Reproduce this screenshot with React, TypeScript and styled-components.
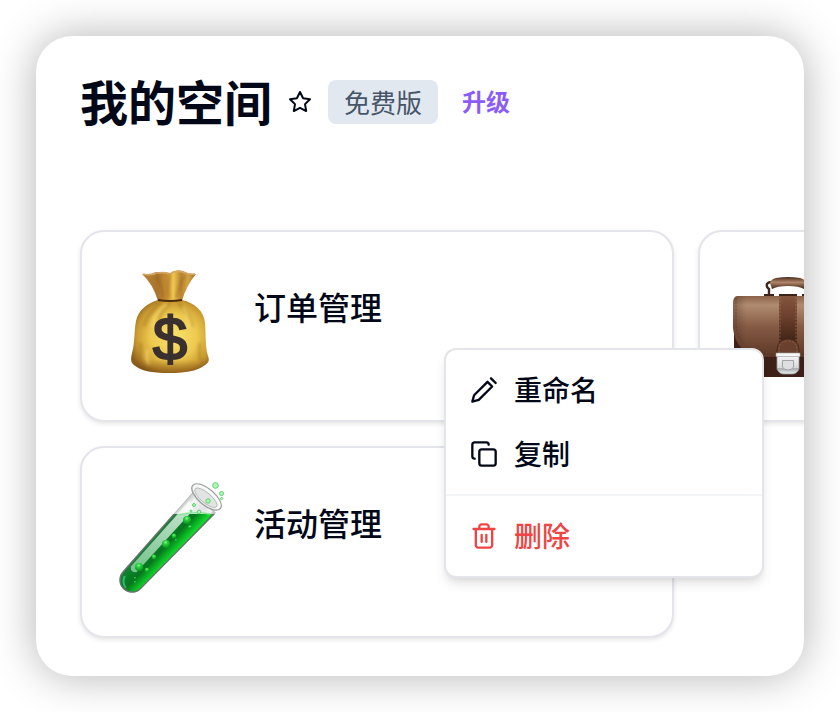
import React from "react";
import styled, { createGlobalStyle, css } from "styled-components";

const GlobalStyle = createGlobalStyle`
  *, *::before, *::after { box-sizing: border-box; }
  body {
    margin: 0;
    background: #ffffff;
    color: #020817;
    font-family: "Noto Sans CJK SC", "Noto Sans", sans-serif;
  }
  h1, h2, ul { margin: 0; padding: 0; }
  ul { list-style: none; }
`;

const Page = styled.div`
  padding: 36px;
`;

const Panel = styled.main`
  padding: 36px 0 38px 44px;
  border-radius: 36px;
  background: #ffffff;
  box-shadow: 0 0 44px rgba(0, 0, 0, 0.3);
  overflow: hidden;
`;

const Header = styled.header`
  display: flex;
  align-items: center;
  height: 60px;
  margin-bottom: 98px;
`;

const Title = styled.h1`
  padding-bottom: 4px;
  font-size: 48px;
  line-height: 56px;
  font-weight: 700;
  white-space: nowrap;
`;

const IconButton = styled.button`
  display: flex;
  margin: 0 16px;
  padding: 0;
  border: 0;
  background: none;
  color: inherit;
  cursor: pointer;
`;

const PlanBadge = styled.span`
  padding: 0 16px;
  border-radius: 8px;
  background: #e2e8f0;
  color: #475569;
  font-size: 26px;
  line-height: 44px;
  white-space: nowrap;
`;

const UpgradeLink = styled.a`
  margin-left: 24px;
  padding-bottom: 2px;
  color: #8b5cf6;
  font-size: 24px;
  line-height: 44px;
  font-weight: 700;
  text-decoration: none;
  white-space: nowrap;
`;

const CardGrid = styled.ul`
  display: grid;
  grid-template-columns: repeat(2, calc(100% - 130px));
  gap: 24px;
`;

const Card = styled.li`
  position: relative;
  display: flex;
  align-items: flex-start;
  gap: 28px;
  min-height: 192px;
  padding: 34px 32px;
  border: 2px solid #e4e4eb;
  border-radius: 24px;
  background: #ffffff;
  box-shadow: 0 2px 4px rgba(0, 0, 0, 0.1);
`;

const CardTitle = styled.h2`
  padding-top: 16px;
  font-size: 32px;
  line-height: 48px;
  font-weight: 500;
  white-space: nowrap;
`;

const Menu = styled.div`
  position: absolute;
  top: 116px;
  right: -92px;
  z-index: 2;
  width: 320px;
  padding: 8px 0;
  border: 2px solid #e4e4eb;
  border-radius: 12px;
  background: #ffffff;
  box-shadow: 0 8px 12px -2px rgba(0, 0, 0, 0.1), 0 4px 8px -4px rgba(0, 0, 0, 0.1);
`;

const MenuItem = styled.button<{ $danger?: boolean }>`
  display: flex;
  align-items: center;
  gap: 16px;
  width: 100%;
  height: 64px;
  padding: 0 24px;
  border: 0;
  background: none;
  color: #020817;
  font: inherit;
  font-size: 28px;
  line-height: 40px;
  font-weight: 500;
  text-align: left;
  cursor: pointer;
  ${(p) => p.$danger && css`color: #ef4444;`}
`;

const MenuLabel = styled.span`
  padding-bottom: 2px;
`;

const Divider = styled.hr`
  height: 2px;
  margin: 8px 0;
  border: 0;
  background: #f3f4f6;
`;

const LineIcon = styled.svg.attrs({ viewBox: "0 0 24 24", "aria-hidden": true })<{ $size: number }>`
  flex: none;
  width: ${(p) => p.$size}px;
  height: ${(p) => p.$size}px;
  fill: none;
  stroke: currentColor;
  stroke-width: 2;
  stroke-linecap: round;
  stroke-linejoin: round;
`;

const Picture = styled.svg.attrs({ viewBox: "0 0 112 112", "aria-hidden": true })`
  flex: none;
  width: 112px;
  height: 112px;
`;

const DollarSign = styled.text`
  font-family: "Liberation Sans", Arial, sans-serif;
  font-size: 62px;
  font-weight: 400;
  fill: #3a302f;
  stroke: #3a302f;
  stroke-width: 2;
  text-anchor: middle;
`;

const BAG_OUTLINE =
  "M44 34H68C81 37 90 45 91 57C92 68 91 80 94 90C96 95 94 97 91 99C84 105 70 107 56 107C38 107 27 105 20 99C16 96 17 92 18 87C21 77 20 65 22 55C24 44 34 37 44 34Z";

function MoneyBag() {
  return (
    <Picture>
      <defs>
        <radialGradient id="bagBody" cx="0.55" cy="0.5" r="0.6">
          <stop offset="0" stopColor="#fbe36d" />
          <stop offset="0.5" stopColor="#edc94e" />
          <stop offset="0.8" stopColor="#c99a30" />
          <stop offset="1" stopColor="#8f611c" />
        </radialGradient>
        <linearGradient id="bagNeck" x1="0" x2="1">
          <stop offset="0" stopColor="#b9823a" />
          <stop offset="0.28" stopColor="#a9752b" />
          <stop offset="0.45" stopColor="#c48c32" />
          <stop offset="0.58" stopColor="#f0c850" />
          <stop offset="0.72" stopColor="#b98430" />
          <stop offset="0.85" stopColor="#d5a445" />
          <stop offset="1" stopColor="#a1712f" />
        </linearGradient>
        <linearGradient id="bagFloor" x1="0" x2="0" y1="0" y2="1">
          <stop offset="0.82" stopColor="#70420f" stopOpacity="0" />
          <stop offset="1" stopColor="#70420f" stopOpacity="0.6" />
        </linearGradient>
        <filter id="bagSoft"><feGaussianBlur stdDeviation="1.5" /></filter>
      </defs>
      <path d="M28 8Q36 9 42 6Q50 6 56 7Q61 3 69 5Q74 8 82 8Q72 20 68 35H44Q39 18 28 8Z" fill="url(#bagNeck)" />
      <path d="M29 8Q36 10 43 7Q51 6 56 8Q61 4 69 6Q75 9 81 8" fill="none" stroke="#d5a868" strokeWidth="1.6" />
      <path d="M43 9Q48 20 49 32M56 8Q53 20 55 32M71 9Q65 20 62 32" fill="none" stroke="#80501b" strokeOpacity="0.45" strokeWidth="2" filter="url(#bagSoft)" />
      <path d={BAG_OUTLINE} fill="url(#bagBody)" />
      <path d="M47 36Q33 48 30 61M56 37Q47 44 45 55M64 37Q75 47 79 61M26 77Q28 90 24 96M86 77Q84 91 88 96" fill="none" stroke="#91641b" strokeOpacity="0.35" strokeWidth="3" filter="url(#bagSoft)" />
      <path d="M53 38Q39 48 38 61M69 41Q74 50 76 62M33 84Q32 93 35 99" fill="none" stroke="#ffe984" strokeOpacity="0.5" strokeWidth="3" filter="url(#bagSoft)" />
      <path d={BAG_OUTLINE} fill="url(#bagFloor)" />
      <path d="M44 34Q56 36 68 34" fill="none" stroke="#4b2c0c" strokeWidth="1.8" />
      <DollarSign x="56" y="94">$</DollarSign>
    </Picture>
  );
}

function TestTube() {
  return (
    <Picture>
      <defs>
        <linearGradient id="glass" x1="0" x2="1">
          <stop offset="0" stopColor="#c6c9ca" />
          <stop offset="0.2" stopColor="#f5f6f6" />
          <stop offset="0.6" stopColor="#e2e3e4" />
          <stop offset="0.85" stopColor="#f2f2f2" />
          <stop offset="1" stopColor="#b2b5b5" />
        </linearGradient>
        <linearGradient id="liquid" x1="0" x2="1">
          <stop offset="0" stopColor="#247a3e" />
          <stop offset="0.3" stopColor="#078028" />
          <stop offset="0.55" stopColor="#08761e" />
          <stop offset="0.8" stopColor="#09bd24" />
          <stop offset="0.94" stopColor="#14d92f" />
          <stop offset="1" stopColor="#09741c" />
        </linearGradient>
        <linearGradient id="shine" x1="0" x2="0" y1="0" y2="1">
          <stop offset="0" stopColor="#ffffff" stopOpacity="0.8" />
          <stop offset="1" stopColor="#b7edc7" stopOpacity="0.62" />
        </linearGradient>
        <radialGradient id="bubble" cx="0.45" cy="0.3" r="0.65">
          <stop offset="0" stopColor="#8ef596" />
          <stop offset="0.4" stopColor="#27cf3b" />
          <stop offset="1" stopColor="#079c20" />
        </radialGradient>
        <clipPath id="liquidLevel"><rect x="0" y="32" width="112" height="80" /></clipPath>
      </defs>
      <g transform="translate(18 98) rotate(43)">
        <path d="M-15 -106L-12 0A12 12 0 0 0 12 0L15 -106Z" fill="url(#glass)" stroke="#b9bcbb" strokeWidth="1" />
      </g>
      <g clipPath="url(#liquidLevel)">
        <g transform="translate(18 98) rotate(43)">
          <path d="M-15 -106L-12 0A12 12 0 0 0 12 0L15 -106Z" fill="url(#liquid)" stroke="#66756a" strokeWidth="1.4" />
        </g>
      </g>
      <g transform="translate(18 98) rotate(43)">
        <path d="M-12 -97L-3 -93L-2 -9Q-6 -4 -10 -9Z" fill="url(#shine)" />
        <path d="M-8 2Q-6 9 1 10" fill="none" stroke="#54dda0" strokeOpacity="0.6" strokeWidth="2" />
      </g>
      <g fill="url(#bubble)">
        <circle cx="73" cy="38" r="4" />
        <circle cx="76" cy="45" r="1.8" />
        <circle cx="60" cy="54" r="2.4" />
        <circle cx="52" cy="62" r="4" />
        <circle cx="62" cy="58" r="1" />
        <circle cx="40" cy="75" r="2.4" />
        <circle cx="25" cy="85" r="4" />
        <circle cx="33" cy="88" r="2.2" />
        <circle cx="21" cy="96" r="1" />
        <circle cx="21" cy="100" r="1" />
      </g>
      <path d="M64 33Q80 29 96 32" fill="none" stroke="#8fe29c" strokeWidth="1.4" />
      <g transform="translate(92.5 15) rotate(40)">
        <ellipse rx="18" ry="8" fill="#e9eaea" stroke="#9c9f9f" strokeWidth="1.3" />
        <ellipse cy="-0.5" rx="16" ry="6" fill="#f2f3f3" stroke="#ffffff" strokeWidth="1.6" />
        <ellipse cy="1" rx="14" ry="5" fill="#e2e3e3" stroke="#b1b4b4" strokeWidth="0.8" />
      </g>
      <g fill="#b4f4bb" stroke="#58d66b" strokeWidth="1">
        <circle cx="101.5" cy="3.5" r="2.8" />
        <circle cx="107.5" cy="11.5" r="2" />
        <circle cx="107.5" cy="16.5" r="1.1" />
        <circle cx="94" cy="19" r="2.2" />
        <circle cx="80" cy="23" r="1.5" />
        <circle cx="85" cy="30" r="1.8" />
        <circle cx="77" cy="29" r="1" />
      </g>
    </Picture>
  );
}

const FLAP_OUTLINE = "M5 30H107Q111 31 111 37V62Q108 91 76 91H36Q4 91 1 62V37Q1 31 5 30Z";

function Briefcase() {
  return (
    <Picture>
      <defs>
        <linearGradient id="leather" x1="0" x2="0" y1="0" y2="1">
          <stop offset="0" stopColor="#8b6249" />
          <stop offset="0.15" stopColor="#b08b70" />
          <stop offset="0.5" stopColor="#865b45" />
          <stop offset="1" stopColor="#5c3726" />
        </linearGradient>
        <linearGradient id="leatherSide" x1="0" x2="1">
          <stop offset="0" stopColor="#432317" stopOpacity="0.35" />
          <stop offset="0.12" stopColor="#432317" stopOpacity="0" />
          <stop offset="0.88" stopColor="#432317" stopOpacity="0" />
          <stop offset="1" stopColor="#432317" stopOpacity="0.35" />
        </linearGradient>
        <linearGradient id="strap" x1="0" x2="0" y1="0" y2="1">
          <stop offset="0" stopColor="#82563e" />
          <stop offset="0.35" stopColor="#6d412d" />
          <stop offset="0.8" stopColor="#412416" />
          <stop offset="1" stopColor="#5a3424" />
        </linearGradient>
        <linearGradient id="steel" x1="0" x2="0" y1="0" y2="1">
          <stop offset="0" stopColor="#f5f5f5" />
          <stop offset="0.65" stopColor="#d7d9da" />
          <stop offset="0.7" stopColor="#a7abad" />
          <stop offset="1" stopColor="#f2f2f2" />
        </linearGradient>
        <linearGradient id="handle" x1="0" x2="0" y1="0" y2="1">
          <stop offset="0" stopColor="#4c2c1c" />
          <stop offset="0.45" stopColor="#b08669" />
          <stop offset="1" stopColor="#3e2115" />
        </linearGradient>
      </defs>
      <path d="M37 29V23Q34 21 35 18Q38 14 42 19M75 29V23Q78 21 77 18Q74 14 70 19" fill="none" stroke="#3f271d" strokeWidth="2.4" />
      <path d="M38 17Q39 13 44 12Q56 10 68 12Q73 13 74 17L72 23Q67 20 56 20Q45 20 40 23Z" fill="url(#handle)" />
      <path d="M32 28H42V31H32ZM47 28H65V31H47ZM70 28H80V31H70Z" fill="#3c2217" />
      <path d="M2 50H110V111H2Z" fill="#3d2017" />
      <path d={FLAP_OUTLINE} fill="url(#leather)" />
      <path d={FLAP_OUTLINE} fill="url(#leatherSide)" />
      <path d="M4 32V60Q8 85 36 88H76Q104 85 108 60V32" fill="none" stroke="#4b2c1e" strokeOpacity="0.55" strokeWidth="0.8" strokeDasharray="2 1.5" />
      <path d="M47 30H65V86H47Z" fill="url(#strap)" />
      <path d="M48 31V76M64 31V76" fill="none" stroke="#ba9177" strokeOpacity="0.6" strokeWidth="0.8" strokeDasharray="2 1.5" />
      <path d="M45 90V83Q46 73 56 73Q66 73 67 83V90Z" fill="#693f2e" stroke="#472619" strokeWidth="0.8" />
      <path d="M47 87V83Q48 75 56 75Q64 75 65 83V87" fill="none" stroke="#b38b72" strokeOpacity="0.5" strokeWidth="0.8" strokeDasharray="2 1.5" />
      <path d="M45 90H67V103Q65 108 60 108H52Q47 108 45 103Z" fill="url(#steel)" stroke="#989b9d" strokeWidth="0.8" />
      <rect x="44" y="87" width="24" height="3.5" rx="0.5" fill="#f6f6f6" stroke="#a4a6a8" strokeWidth="0.6" />
      <path d="M50.5 94.5H61.5V101Q60 104 56 104Q52 104 50.5 101Z" fill="#dedfe0" stroke="#929698" strokeWidth="0.8" />
    </Picture>
  );
}

function StarIcon() {
  return (
    <LineIcon $size={24}>
      <path d="m12 2 3.09 6.26L22 9.27l-5 4.87 1.18 6.88L12 17.77l-6.18 3.25L7 14.14 2 9.27l6.91-1.01L12 2Z" />
    </LineIcon>
  );
}

function PencilIcon() {
  return (
    <LineIcon $size={28}>
      <path d="m18 2 4 4" />
      <path d="M7.5 20.5 19 9l-4-4L3.5 16.5 2 22Z" />
    </LineIcon>
  );
}

function CopyIcon() {
  return (
    <LineIcon $size={28}>
      <rect x="8" y="8" width="14" height="14" rx="2" />
      <path d="M4 16c-1.1 0-2-.9-2-2V4c0-1.1.9-2 2-2h10c1.1 0 2 .9 2 2" />
    </LineIcon>
  );
}

function TrashIcon() {
  return (
    <LineIcon $size={28}>
      <path d="M3 6h18M19 6v14c0 1-1 2-2 2H7c-1 0-2-1-2-2V6M8 6V4c0-1 1-2 2-2h4c1 0 2 1 2 2v2M10 11v6M14 11v6" />
    </LineIcon>
  );
}

export default function App() {
  return (
    <>
      <GlobalStyle />
      <Page>
        <Panel>
          <Header>
            <Title>我的空间</Title>
            <IconButton type="button" aria-label="收藏">
              <StarIcon />
            </IconButton>
            <PlanBadge>免费版</PlanBadge>
            <UpgradeLink href="#">升级</UpgradeLink>
          </Header>
          <CardGrid>
            <Card>
              <MoneyBag />
              <CardTitle>订单管理</CardTitle>
              <Menu role="menu">
                <MenuItem type="button" role="menuitem">
                  <PencilIcon />
                  <MenuLabel>重命名</MenuLabel>
                </MenuItem>
                <MenuItem type="button" role="menuitem">
                  <CopyIcon />
                  <MenuLabel>复制</MenuLabel>
                </MenuItem>
                <Divider />
                <MenuItem type="button" role="menuitem" $danger>
                  <TrashIcon />
                  <MenuLabel>删除</MenuLabel>
                </MenuItem>
              </Menu>
            </Card>
            <Card>
              <Briefcase />
            </Card>
            <Card>
              <TestTube />
              <CardTitle>活动管理</CardTitle>
            </Card>
          </CardGrid>
        </Panel>
      </Page>
    </>
  );
}
